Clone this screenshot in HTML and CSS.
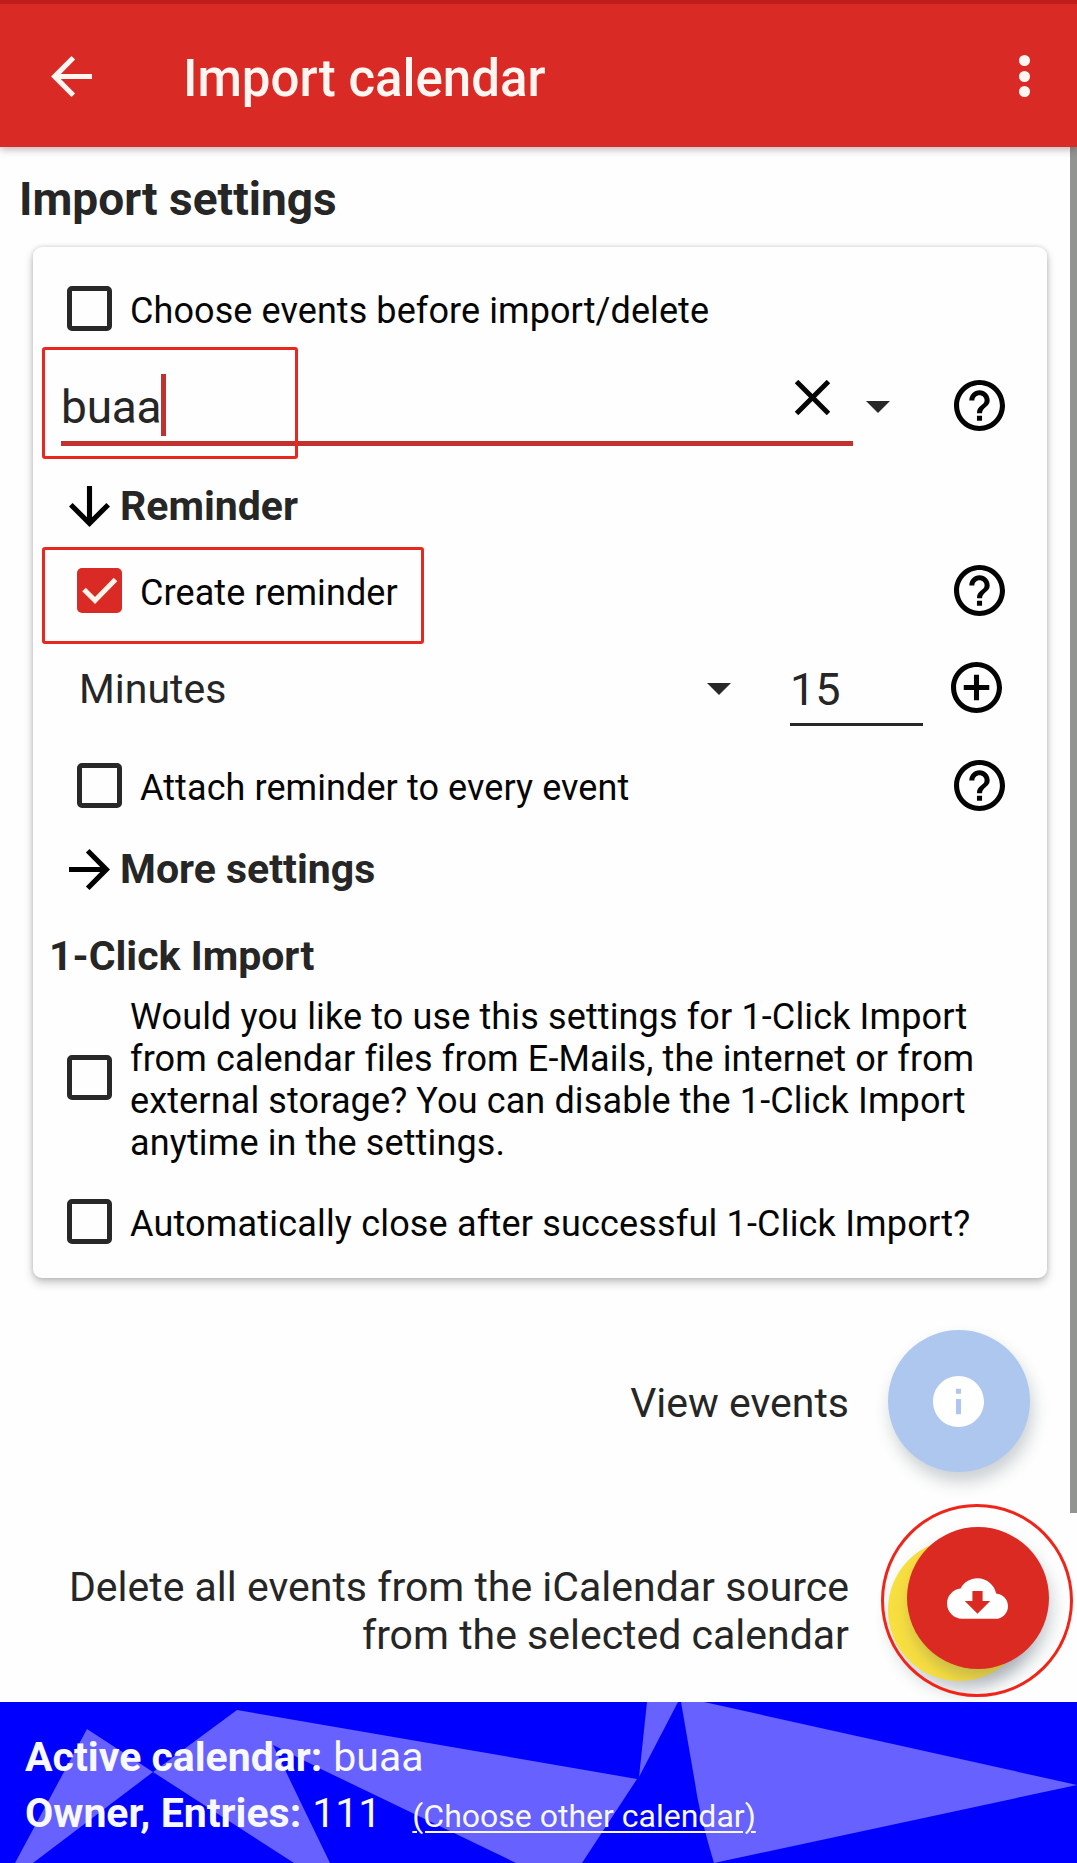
FILE: index.html
```html
<!DOCTYPE html>
<html lang="en">
<head>
<meta charset="utf-8">
<title>Import calendar</title>
<link rel="stylesheet" href="styles.css">
</head>
<body>
<svg class="sprite" aria-hidden="true">
  <symbol id="help" viewBox="2 2 20 20"><path d="M11 18h2v-2h-2v2zm1-16C6.48 2 2 6.48 2 12s4.48 10 10 10 10-4.48 10-10S17.52 2 12 2zm0 18c-4.41 0-8-3.59-8-8s3.59-8 8-8 8 3.59 8 8-3.59 8-8 8zm0-14c-2.210 0-4 1.790-4 4h2c0-1.100.9-2 2-2s2 .9 2 2c0 2-3 1.750-3 5h2c0-2.250 3-2.500 3-5 0-2.210-1.790-4-4-4z"/></symbol>
  <symbol id="arrow" viewBox="4 4 16 16"><path d="M12 4l-1.410 1.410L16.170 11H4v2h12.170l-5.580 5.590L12 20l8-8z"/></symbol>
</svg>

<header class="appbar">
  <svg class="back" viewBox="4 4 16 16"><path d="M20 11H7.830l5.590-5.590L12 4l-8 8 8 8 1.410-1.410L7.830 13H20v-2z"/></svg>
  <h1 class="appbar-title">Import calendar</h1>
  <div class="overflow"><i></i><i></i><i></i></div>
</header>

<main class="content">
  <h2 class="section-title">Import settings</h2>

  <section class="card">
    <div class="row row-choose">
      <span class="checkbox"></span>
      <span class="label">Choose events before import/delete</span>
    </div>

    <div class="row row-name">
      <div class="textfield">
        <span class="textfield-value">buaa</span><span class="caret"></span>
        <svg class="clear" viewBox="0 0 34 34"><path d="M1.500 1.500L32.500 32.500M32.500 1.500L1.500 32.500"/></svg>
      </div>
      <span class="triangle"></span>
      <svg class="action"><use href="#help"/></svg>
      <span class="mark mark-name"></span>
    </div>

    <div class="row row-heading row-reminder">
      <svg class="arrow arrow-down"><use href="#arrow"/></svg>
      <h3>Reminder</h3>
    </div>

    <div class="row row-create">
      <span class="checkbox checked"><svg viewBox="0 0 45 45"><path d="M7 21.500L18 32.500L38.500 11.500"/></svg></span>
      <span class="label">Create reminder</span>
      <svg class="action"><use href="#help"/></svg>
      <span class="mark mark-create"></span>
    </div>

    <div class="row row-minutes">
      <span class="unit">Minutes</span>
      <span class="triangle"></span>
      <div class="amount">15</div>
      <svg class="action add" viewBox="2 2 20 20"><path d="M13 7h-2v4H7v2h4v4h2v-4h4v-2h-4V7zm-1-5C6.480 2 2 6.480 2 12s4.480 10 10 10 10-4.480 10-10S17.520 2 12 2zm0 18c-4.410 0-8-3.590-8-8s3.590-8 8-8 8 3.590 8 8-3.590 8-8 8z"/></svg>
    </div>

    <div class="row row-attach">
      <span class="checkbox"></span>
      <span class="label">Attach reminder to every event</span>
      <svg class="action"><use href="#help"/></svg>
    </div>

    <div class="row row-heading row-more">
      <svg class="arrow"><use href="#arrow"/></svg>
      <h3>More settings</h3>
    </div>

    <div class="row row-oneclick"><h3>1-Click Import</h3></div>

    <div class="row row-use">
      <span class="checkbox"></span>
      <span class="label">Would you like to use this settings for 1-Click Import<br>from calendar files from E-Mails, the internet or from<br>external storage? You can disable the 1-Click Import<br>anytime in the settings.</span>
    </div>

    <div class="row row-close">
      <span class="checkbox"></span>
      <span class="label">Automatically close after successful 1-Click Import?</span>
    </div>
  </section>

  <div class="fab-row fab-row-view">
    <span class="fab-label">View events</span>
    <div class="fab fab-info"><svg viewBox="2 2 20 20"><path d="M12 2C6.480 2 2 6.480 2 12s4.480 10 10 10 10-4.480 10-10S17.520 2 12 2zm1 15h-2v-6h2v6zm0-8h-2V7h2v2z"/></svg></div>
  </div>

  <div class="fab-row fab-row-delete">
    <span class="fab-label">Delete all events from the iCalendar source<br>from the selected calendar</span>
    <div class="fab fab-delete">
      <div class="fab fab-import"><svg viewBox="0 4 24 16"><path d="M19.350 10.040C18.670 6.590 15.640 4 12 4 9.110 4 6.600 5.640 5.350 8.040 2.340 8.360 0 10.910 0 14c0 3.310 2.690 6 6 6h13c2.760 0 5-2.240 5-5 0-2.640-2.050-4.780-4.650-4.960zM17 13l-5 5-5-5h3V9h4v4h3z"/></svg></div>
      <span class="ring"></span>
    </div>
  </div>
  <div class="scrollbar"></div>
</main>

<footer class="status">
  <svg class="pattern" viewBox="0 0 1077 161" preserveAspectRatio="none">
    <path d="M87 27L153 70L33 161H15Z"/>
    <path d="M237 8L637 77L582 161H516L323 68L273 43L330 161H294L153 70Z"/>
    <path d="M647 0H678L639 75Z"/>
    <path d="M681 0H704L1077 83L714 161Q700 115 695 81Z"/>
  </svg>
  <div class="status-line"><b>Active calendar:</b><span class="value">buaa</span></div>
  <div class="status-line"><b>Owner, Entries:</b><span class="value">111</span><a class="choose">(Choose other calendar)</a></div>
</footer>
</body>
</html>
```
FILE: styles.css
```css
* { box-sizing: border-box; }
body {
  margin: 0;
  width: 1077px;
  height: 1863px;
  overflow: hidden;
  display: flex;
  flex-direction: column;
  background: #fdfefd;
  color: #262626;
  font-family: Roboto, "Liberation Sans", sans-serif;
  white-space: nowrap;
}
h1, h2, h3 { margin: 0; }
svg { display: block; flex: none; }
.sprite { position: absolute; width: 0; height: 0; }

.appbar {
  position: relative;
  z-index: 2;
  flex: none;
  height: 147px;
  padding: 3px 47px 0 51px;
  border-top: 4px solid #bf1d1a;
  background: #da2a26;
  box-shadow: 0 2px 8px rgba(60, 20, 40, .35);
  display: flex;
  align-items: center;
}
.back { width: 41px; height: 41px; fill: #fff6f2; margin-bottom: 2px; }
.appbar-title {
  flex: 1;
  margin-left: 91px;
  padding-top: 4px;
  font-size: 51px;
  line-height: 60px;
  font-weight: 500;
  color: #fff6f2;
}
.overflow { display: flex; flex-direction: column; gap: 4.500px; margin-bottom: 2px; }
.overflow i { width: 11px; height: 11px; border-radius: 50%; background: #fff6f2; }

.content { position: relative; flex: none; height: 1555px; padding-left: 33px; }
.section-title {
  height: 100px;
  padding-top: 22px;
  margin-left: -14px;
  font-size: 46px;
  line-height: 60px;
  font-weight: 700;
}
.card {
  width: 1014px;
  height: 1031px;
  padding: 20px 42px 0 28px;
  border-radius: 9px;
  background: #fdfefd;
  box-shadow: 0 5px 10px rgba(0, 0, 0, .22), 0 0 5px rgba(0, 0, 0, .16);
}
.row { position: relative; display: flex; align-items: center; }
.row-choose { height: 83px; padding-left: 6px; }
.row-name { height: 111px; }
.row-reminder { height: 91px; }
.row-create { height: 77px; padding-left: 16px; }
.row-minutes { height: 117px; padding-left: 18px; }
.row-attach { height: 79px; padding-left: 16px; }
.row-more { height: 89px; }
.row-oneclick { height: 77px; padding-top: 8px; margin-left: -12px; }
.row-use { height: 173px; padding-left: 6px; }
.row-close { height: 115px; padding-left: 6px; }
.row-heading { padding-left: 8px; gap: 10px; }
h3 { font-size: 41px; line-height: 48px; font-weight: 700; padding-bottom: 2px; }

.checkbox {
  flex: none;
  width: 45px;
  height: 45px;
  border: 5px solid #282828;
  border-radius: 5px;
}
.checkbox.checked { border: 0; background: #da2a26; }
.checked path { fill: none; stroke: #fff3e8; stroke-width: 5; }
.label {
  margin-left: 18px;
  padding-top: 4px;
  font-size: 36px;
  line-height: 42px;
  letter-spacing: .08px;
  color: #060606;
}
.row-use .label { letter-spacing: .13px; }
.row-close .label { letter-spacing: .18px; }
.action { width: 51px; height: 51px; margin-left: auto; fill: #040404; }
.add { margin-right: 3px; }
.triangle {
  flex: none;
  border: 12.500px solid transparent;
  border-top-color: #282828;
  border-bottom: 0;
}

.textfield {
  width: 792px;
  height: 81px;
  border-bottom: 5px solid #c0322e;
  display: flex;
  align-items: center;
}
.textfield-value { font-size: 46px; line-height: 56px; padding-top: 8px; letter-spacing: -.2px; }
.caret { width: 5px; height: 62px; margin-top: 4px; background: #c0322e; }
.clear { width: 35px; height: 35px; margin: 0 23px 11px auto; }
.clear path { stroke: #060606; stroke-width: 4.800; }
.row-name .triangle { margin-left: 13px; margin-top: 2px; }
.arrow { width: 41px; height: 41px; fill: #000; }
.arrow-down { transform: rotate(90deg); }

.unit { width: 628px; font-size: 41px; line-height: 48px; padding-top: 2px; }
.row-minutes .triangle { margin-top: 3px; }
.amount {
  width: 133px;
  height: 76px;
  margin-left: 59px;
  padding: 10px 0 0;
  border-bottom: 3px solid #282828;
  font-size: 45px;
  line-height: 60px;
}

/* hand-drawn highlight frames above the form */
.mark { position: absolute; border: 3px solid #e8281f; border-radius: 3px; }
.mark-name { left: -19px; top: -3px; width: 256px; height: 112px; }
.mark-create { left: -19px; top: -5px; width: 382px; height: 97px; }

.fab-row { display: flex; align-items: center; justify-content: flex-end; gap: 39px; }
.fab-row-view { height: 142px; margin-top: 52px; padding-right: 47px; }
.fab-row-delete { height: 142px; margin-top: 67px; padding-right: 47px; }
.fab-label { font-size: 41px; line-height: 48px; text-align: right; padding-top: 3px; }
.fab-row-delete .fab-label { padding-top: 1px; }
.fab {
  position: relative;
  flex: none;
  width: 142px;
  height: 142px;
  border-radius: 50%;
  display: flex;
  align-items: center;
  justify-content: center;
  box-shadow: 3px 10px 16px rgba(60, 70, 90, .25);
}
.fab svg { fill: #fff; }
.fab-info { background: #aec7ef; }
.fab-info svg { width: 51px; height: 51px; margin-right: 1px; }
.fab-delete { background: #f8df40; }
.fab-import { position: absolute; left: 19px; top: -12px; background: #da2a22; }
.fab-import svg { width: 61px; height: 41px; margin-right: 1px; }
.ring {
  position: absolute;
  left: -7px;
  top: -35px;
  width: 192px;
  height: 193px;
  border: 3px solid #f02418;
  border-radius: 50%;
}
.scrollbar { position: absolute; right: 0; top: 0; width: 7px; height: 1366px; background: #929491; }

.status {
  position: relative;
  flex: none;
  height: 161px;
  padding: 27px 0 0 25px;
  background: #0000fe;
  color: #f8f8ff;
}
.pattern { position: absolute; inset: 0; width: 1077px; height: 161px; fill: #6661ff; }
.status-line { position: relative; height: 56px; font-size: 41px; line-height: 56px; display: flex; }
.value { margin-left: 11px; }
.choose {
  margin-left: 31px;
  padding-top: 3px;
  font-size: 32px;
  text-decoration: underline;
  text-decoration-thickness: 2px;
  text-underline-offset: 4px;
}
```
